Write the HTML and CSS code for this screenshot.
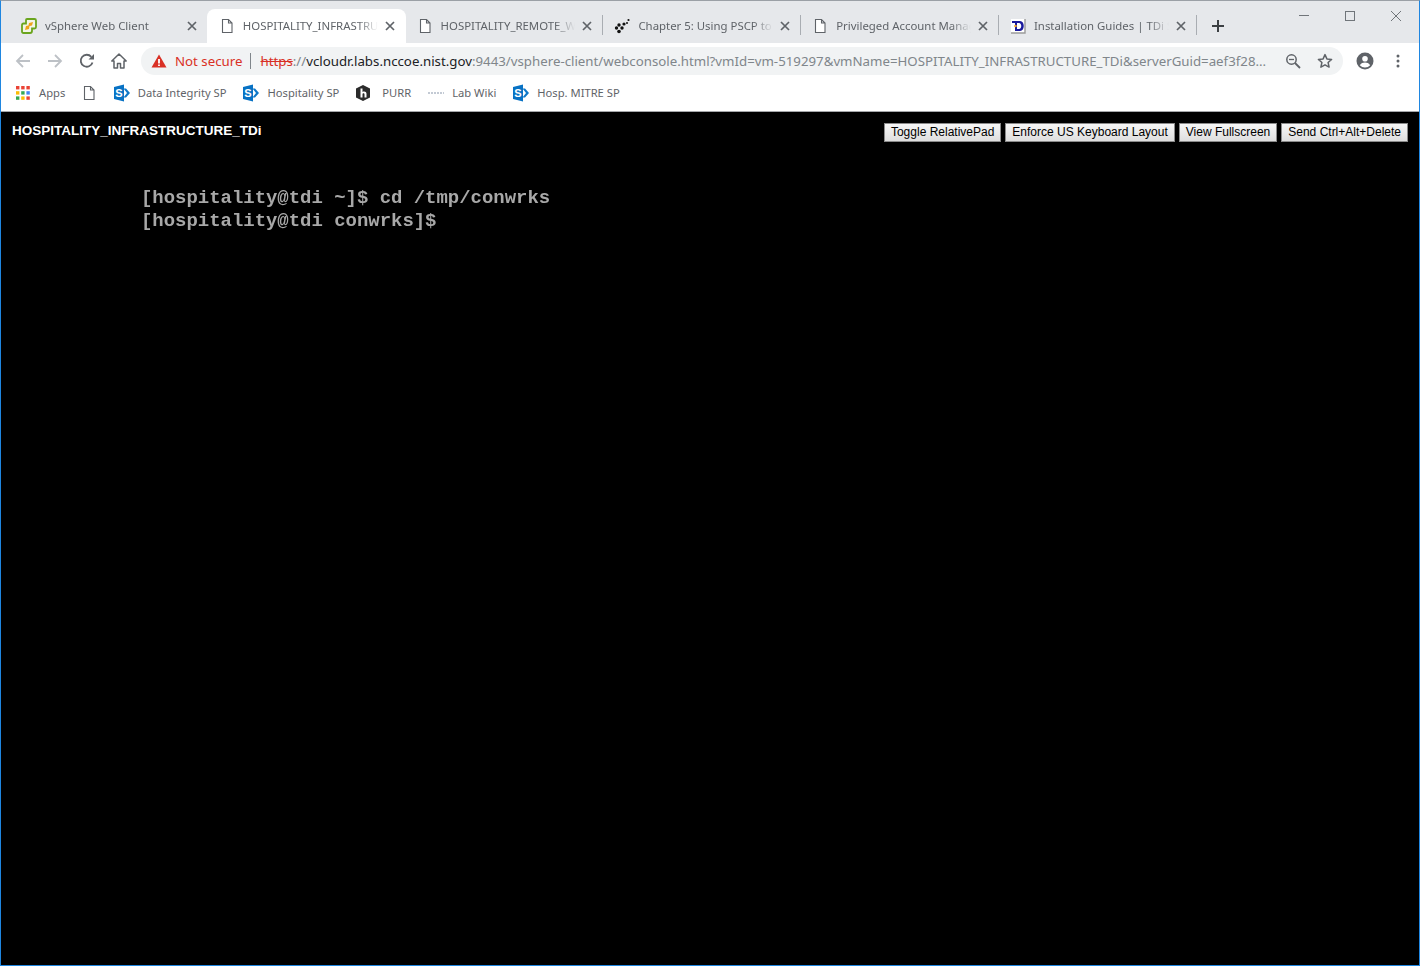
FILE: index.html
```html
<!DOCTYPE html>
<html lang="en">
<head>
<meta charset="utf-8">
<title>HOSPITALITY_INFRASTRUCTURE_TDi</title>
<link rel="stylesheet" href="styles.css">
</head>
<body>
<svg class="defs" width="0" height="0" aria-hidden="true">
  <symbol id="doc" viewBox="0 0 16 16"><path d="M3.5 1.5h6l3.5 3.5v9.5h-9.5z M9.5 1.5v3.5h3.5" fill="#fff" stroke="#5f6368" stroke-width="1.1"/></symbol>
  <symbol id="x" viewBox="0 0 10 10"><path d="M1 1l8 8M9 1l-8 8" stroke="#5f6368" stroke-width="1.7" fill="none"/></symbol>
  <symbol id="sp" viewBox="0 0 18 18"><path d="M10.5 4.500h2.500l4 4.500-4 4.500h-2.500l3.500-4.500z" fill="#0f78c8"/><path d="M1 3l10-2.500v17L1 15z" fill="#0872c4"/><text x="6" y="13" class="sp-s">S</text></symbol>
</svg>
<div class="window">
  <div class="tabstrip">
    <div class="tab">
      <svg class="ico" viewBox="0 0 16 16"><path d="M6 1h7.500Q15 1 15 2.500V9q0 1.500-1.500 1.500H11V13q0 2-2 2H2.500Q1 15 1 13.500V7q0-1.500 1.500-1.500H5V2q0-1 1-1z" fill="#f2f5e6" stroke="#6aa51e" stroke-width="1.800"/><path d="M4 12l1-4 2.500-.5L8 5l4-1-1 3.500-2.500.5L8 11z" fill="#eea31a"/></svg>
      <span class="tab-title">vSphere Web Client</span>
      <svg class="close"><use href="#x"/></svg>
    </div>
    <div class="tab active">
      <svg class="ico"><use href="#doc"/></svg>
      <span class="tab-title">HOSPITALITY_INFRASTRUCTURE_TDi</span>
      <svg class="close"><use href="#x"/></svg>
    </div>
    <div class="tab sep">
      <svg class="ico"><use href="#doc"/></svg>
      <span class="tab-title">HOSPITALITY_REMOTE_WORKSTATION</span>
      <svg class="close"><use href="#x"/></svg>
    </div>
    <div class="tab sep">
      <svg class="ico" viewBox="0 0 16 16"><g fill="#111"><circle cx="2.500" cy="10" r="1.700"/><circle cx="5" cy="7" r="1.700"/><circle cx="5" cy="13.500" r="1.800"/><circle cx="8" cy="10" r="1.700"/><circle cx="10" cy="6" r="1.600"/><circle cx="14.500" cy="2" r="1.100"/><circle cx="13" cy="5" r="1"/></g></svg>
      <span class="tab-title">Chapter 5: Using PSCP to transfer</span>
      <svg class="close"><use href="#x"/></svg>
    </div>
    <div class="tab sep">
      <svg class="ico"><use href="#doc"/></svg>
      <span class="tab-title">Privileged Account Management</span>
      <svg class="close"><use href="#x"/></svg>
    </div>
    <div class="tab sep">
      <svg class="ico" viewBox="0 0 16 16"><rect x="1" y="1" width="14" height="14" fill="#fff"/><path d="M15 1v14H1" fill="none" stroke="#9a9a9a" stroke-width="1.400"/><path d="M2 3h7v2H7v8H5V5H2z" fill="#1a1a9c"/><path d="M7 3h3c5 0 5 10 0 10H6v-2h3c3 0 3-6 0-6H7z" fill="#1a1a9c"/><circle cx="5.500" cy="8" r="1.300" fill="#f0a020"/></svg>
      <span class="tab-title">Installation Guides | TDi Security</span>
      <svg class="close"><use href="#x"/></svg>
    </div>
    <div class="tab-end">
      <svg class="plus" viewBox="0 0 12 12"><path d="M6 0v12M0 6h12" stroke="#3c4043" stroke-width="2"/></svg>
    </div>
    <div class="winctl">
      <svg viewBox="0 0 46 16"><path d="M18 7.500h10" stroke="#70757a" fill="none"/></svg>
      <svg viewBox="0 0 46 16"><rect x="18.500" y="3.500" width="9" height="9" stroke="#70757a" fill="none"/></svg>
      <svg viewBox="0 0 46 16"><path d="M18 3l10 10M28 3L18 13" stroke="#70757a" fill="none"/></svg>
    </div>
  </div>
  <div class="toolbar">
    <svg class="tb-ico" viewBox="0 0 16 16"><path d="M15 8H2M8 2L2 8l6 6" fill="none" stroke="#bdc1c6" stroke-width="1.800"/></svg>
    <svg class="tb-ico" viewBox="0 0 16 16"><path d="M1 8h13M8 2l6 6-6 6" fill="none" stroke="#bdc1c6" stroke-width="1.800"/></svg>
    <svg class="tb-ico" viewBox="0 0 16 16"><path d="M13.500 9.500A6 6 0 1 1 12.300 3.800" fill="none" stroke="#5f6368" stroke-width="1.800"/><path d="M9.500 6.500h5.500V1z" fill="#5f6368"/></svg>
    <svg class="tb-ico" viewBox="0 0 16 16"><path d="M8 1L0.800 8H3v7h3.500v-4.500h3V15H13V8h2.200z" fill="#fff" stroke="#5f6368" stroke-width="1.500" stroke-linejoin="round"/></svg>
    <div class="omnibox">
      <svg class="warn" viewBox="0 0 16 16"><path d="M8 1.500L15.500 14.500H.5z" fill="#d93025"/><path d="M7.100 6h1.800v4.600H7.100zM7.100 11.400h1.800v1.600H7.100z" fill="#fff"/></svg>
      <span class="not-secure">Not secure</span>
      <span class="divider"></span>
      <span class="url"><s class="scheme">https</s><span class="dim">://</span><span class="host">vcloudr.labs.nccoe.nist.gov</span><span class="dim">:9443/vsphere-client/webconsole.html?vmId=vm-519297&amp;vmName=HOSPITALITY_INFRASTRUCTURE_TDi&amp;serverGuid=aef3f28...</span></span>
      <svg class="om-ico" viewBox="0 0 16 16"><circle cx="6.500" cy="6.500" r="4.700" fill="none" stroke="#5f6368" stroke-width="1.500"/><path d="M10 10l5 5" stroke="#5f6368" stroke-width="1.800"/><path d="M4 6.500h5" stroke="#5f6368" stroke-width="1.300"/></svg>
      <svg class="om-ico star" viewBox="0 0 16 16"><path d="M8 1.600l1.900 4.300 4.700.5-3.500 3.100 1 4.600L8 11.800l-4.100 2.300 1-4.600-3.500-3.100 4.700-.5z" fill="none" stroke="#5f6368" stroke-width="1.500" stroke-linejoin="round"/></svg>
    </div>
    <svg class="avatar" viewBox="0 0 18 18"><circle cx="9" cy="9" r="8.500" fill="#5f6368"/><circle cx="9" cy="6.800" r="2.800" fill="#fff"/><path d="M3.800 13.200c1.200-2.200 3.200-2.800 5.200-2.800s4 .6 5.200 2.800a7 7 0 0 1-10.400 0z" fill="#fff"/></svg>
    <svg class="kebab" viewBox="0 0 4 14"><circle cx="2" cy="2" r="1.500" fill="#5f6368"/><circle cx="2" cy="7" r="1.500" fill="#5f6368"/><circle cx="2" cy="12" r="1.500" fill="#5f6368"/></svg>
  </div>
  <div class="bookmarks">
    <div class="bm apps">
      <svg class="bm-ico" viewBox="0 0 14 14"><g><rect x="0" y="0" width="3.400" height="3.400" fill="#ea4335"/><rect x="5.200" y="0" width="3.400" height="3.400" fill="#ea4335"/><rect x="10.400" y="0" width="3.400" height="3.400" fill="#ea4335"/><rect x="0" y="5.200" width="3.400" height="3.400" fill="#fbbc05"/><rect x="5.200" y="5.200" width="3.400" height="3.400" fill="#34a853"/><rect x="10.400" y="5.200" width="3.400" height="3.400" fill="#4285f4"/><rect x="0" y="10.400" width="3.400" height="3.400" fill="#34a853"/><rect x="5.200" y="10.400" width="3.400" height="3.400" fill="#fbbc05"/><rect x="10.400" y="10.400" width="3.400" height="3.400" fill="#ea4335"/></g></svg>
      <span class="bm-label">Apps</span>
    </div>
    <svg class="bm-doc"><use href="#doc"/></svg>
    <div class="bm b-gap"><svg class="bm-sp"><use href="#sp"/></svg><span class="bm-label">Data Integrity SP</span></div>
    <div class="bm b-gap"><svg class="bm-sp"><use href="#sp"/></svg><span class="bm-label">Hospitality SP</span></div>
    <div class="bm b-gap">
      <svg class="bm-h" viewBox="0 0 16 16"><path d="M8 0l7 3.500v9L8 16l-7-3.500v-9z" fill="#2b2b2b"/><path d="M5.500 3.500h2v3.400c1.800-1 4-.3 4 1.900v3.700h-2V9.300c0-1.400-2-1.400-2 0v3.200h-2z" fill="#fff"/></svg>
      <span class="bm-label">PURR</span>
    </div>
    <div class="bm b-gap">
      <svg class="bm-wiki" viewBox="0 0 18 6"><path d="M1 3h16" stroke="#c3cad4" stroke-width="2" stroke-dasharray="2 1"/></svg>
      <span class="bm-label">Lab Wiki</span>
    </div>
    <div class="bm"><svg class="bm-sp"><use href="#sp"/></svg><span class="bm-label">Hosp. MITRE SP</span></div>
  </div>
  <main class="console">
    <header class="console-bar">
      <h1 class="vm-name">HOSPITALITY_INFRASTRUCTURE_TDi</h1>
      <div class="actions">
        <button class="act" type="button">Toggle RelativePad</button>
        <button class="act" type="button">Enforce US Keyboard Layout</button>
        <button class="act" type="button">View Fullscreen</button>
        <button class="act" type="button">Send Ctrl+Alt+Delete</button>
      </div>
    </header>
    <pre class="terminal">[hospitality@tdi ~]$ cd /tmp/conwrks
[hospitality@tdi conwrks]$</pre>
  </main>
</div>
</body>
</html>
```
FILE: styles.css
```css
* { box-sizing: border-box; }
html, body { margin: 0; height: 100%; background: #000; overflow: hidden; }
.defs { position: absolute; }
.sp-s { font: bold 11px "Liberation Sans", sans-serif; fill: #fff; text-anchor: middle; }
.window {
  height: 966px;
  display: flex;
  flex-direction: column;
  border: 1px solid #1f86e0;
  border-top: 1px solid #9ba0a6;
  font-family: "Noto Sans", "Open Sans", sans-serif;
}
.tabstrip {
  height: 42px;
  flex: none;
  display: flex;
  align-items: flex-end;
  padding-left: 8px;
  background: #e6e8eb;
}
.tab {
  position: relative;
  width: 197.8px;
  height: 34px;
  flex: none;
  display: flex;
  align-items: center;
  padding: 0 10px 0 12px;
  font-size: 11.4px;
  color: #5f6368;
}
.tab.active {
  width: 199px;
  margin-right: -1.2px;
  padding-right: 11.2px;
  background: #fff;
  border-radius: 8px 8px 0 0;
}
.tab.sep::before {
  content: "";
  position: absolute;
  right: -1px;
  top: 6px;
  height: 20px;
  width: 1px;
  background: #a9adb2;
}
.ico { width: 16px; height: 16px; flex: none; margin-right: 8px; }
.tab-title {
  flex: 1;
  min-width: 0;
  white-space: nowrap;
  overflow: hidden;
  margin-bottom: 1px;
  -webkit-mask-image: linear-gradient(to right, #000 calc(100% - 20px), transparent 100%);
  mask-image: linear-gradient(to right, #000 calc(100% - 20px), transparent 100%);
}
.close { width: 10px; height: 10px; flex: none; margin-left: 7px; }
.tab-end { width: 44px; height: 34px; display: flex; align-items: center; justify-content: center; flex: none; }
.plus { width: 12px; height: 12px; }
.winctl {
  margin-left: auto;
  align-self: flex-start;
  display: flex;
  padding-top: 7px;
}
.winctl svg { width: 46px; height: 16px; display: block; }
.toolbar {
  height: 35px;
  flex: none;
  display: flex;
  align-items: center;
  background: #fff;
  padding: 1px 0 0 14px;
}
.tb-ico { width: 16px; height: 16px; flex: none; margin-right: 16px; }
.omnibox {
  width: 1202px;
  height: 28px;
  margin-left: -2px;
  flex: none;
  display: flex;
  align-items: center;
  padding-left: 10px;
  background: #f1f3f4;
  border-radius: 14px;
  font-size: 13.27px;
}
.warn { width: 16px; height: 16px; flex: none; margin-right: 8px; }
.not-secure { color: #d93025; }
.divider { width: 1px; height: 16px; background: #80868b; margin: 0 9px 0 8px; flex: none; }
.url { flex: 1; min-width: 0; white-space: nowrap; overflow: hidden; color: #80868b; }
.scheme { color: #d93025; }
.host { color: #202124; }
.om-ico { width: 16px; height: 16px; flex: none; margin-left: 16px; }
.star { margin-right: 10px; }
.avatar { width: 18px; height: 18px; flex: none; margin-left: 13px; }
.kebab { width: 4px; height: 14px; flex: none; margin-left: 22px; }
.bookmarks {
  height: 34px;
  flex: none;
  display: flex;
  align-items: center;
  padding: 0 0 3px 15px;
  background: #fff;
  border-bottom: 1px solid #a5a7aa;
  font-size: 11.2px;
  color: #5f6368;
}
.bm { display: flex; align-items: center; flex: none; }
.bm-label { margin-bottom: 1px; }
.apps { margin-right: 16px; }
.bm-ico { width: 14px; height: 14px; margin-right: 9px; flex: none; }
.bm-doc { width: 16px; height: 16px; margin-right: 15.5px; flex: none; }
.bm-sp { width: 18px; height: 18px; margin-right: 7px; flex: none; }
.bm-h { width: 16px; height: 16px; margin-right: 11px; flex: none; }
.bm-wiki { width: 18px; height: 6px; margin-right: 7px; flex: none; }
.b-gap { margin-right: 16px; }
.console { flex: 1; min-height: 0; background: #000; display: flex; flex-direction: column; }
.console-bar {
  display: flex;
  justify-content: space-between;
  align-items: flex-start;
  padding: 11px 11px 0 11px;
}
.vm-name {
  margin: 0;
  font: bold 13.5px/15px "Liberation Sans", Arial, sans-serif;
  color: #fff;
}
.actions { display: flex; gap: 4px; }
.act {
  height: 19px;
  padding: 0 6px;
  margin: 0;
  font: 12px/15px "Liberation Sans", Arial, sans-serif;
  color: #000;
  background: linear-gradient(#f6f6f6, #dedede);
  border: 1px solid #8a8a8a;
  border-radius: 0;
}
.terminal {
  margin: 0;
  padding: 45px 0 0 140px;
  font: bold 18.95px/23px "Liberation Mono", "DejaVu Sans Mono", monospace;
  color: #a8a8a8;
  filter: blur(0.4px);
}
```
